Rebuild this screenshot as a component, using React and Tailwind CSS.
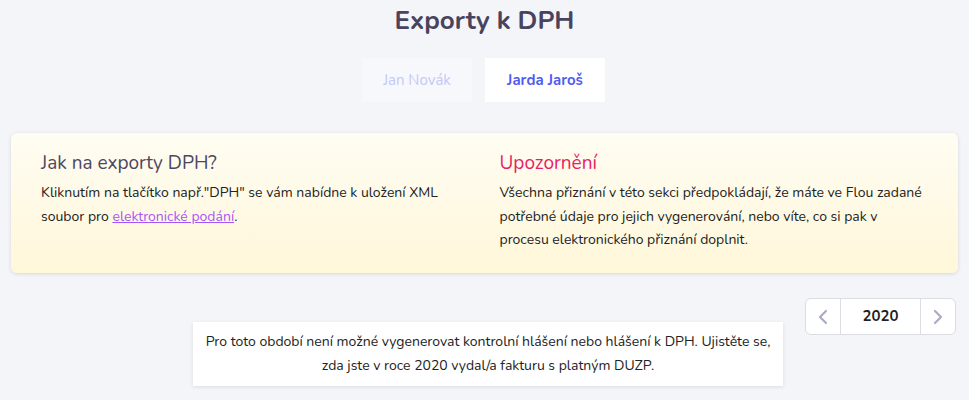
const font = { fontFamily: '"Nunito", "Open Sans", "Noto Sans", sans-serif' };

const YearPicker = ({ year }) => (
    <div className="flex h-[37px] rounded-md border border-[#dcdde3] bg-white overflow-hidden">
        <button className="w-[35px] flex items-center justify-center border-r border-[#dcdde3] text-[#a9adc4]">
            <svg width="10" height="16" viewBox="0 0 10 16" fill="none" stroke="currentColor" strokeWidth="2.2" strokeLinecap="round" strokeLinejoin="round">
                <path d="M8 2 L2 8 L8 14" />
            </svg>
        </button>
        <div className="w-[79px] flex items-center justify-center text-[15px] font-bold text-[#1f1f24]">{year}</div>
        <button className="w-[35px] flex items-center justify-center border-l border-[#dcdde3] text-[#a9adc4]">
            <svg width="10" height="16" viewBox="0 0 10 16" fill="none" stroke="currentColor" strokeWidth="2.2" strokeLinecap="round" strokeLinejoin="round">
                <path d="M2 2 L8 8 L2 14" />
            </svg>
        </button>
    </div>
);

const App = () => {
    return (
        <div className="min-h-[400px] bg-[#f4f5f8] text-[#222] overflow-hidden" style={font}>
            <h1 className="pt-[3px] text-center text-[26px] leading-[36px] font-bold text-[#49435f]">Exporty k DPH</h1>

            <div className="mt-[19px] flex justify-center gap-[13px] pr-[2px]">
                <button className="w-[110px] h-[44px] bg-[#f7f8fb] text-[15px] text-[#c4c8f7]">Jan Novák</button>
                <button className="w-[120px] h-[44px] bg-white text-[15px] font-bold text-[#4f5cf0]">Jarda Jaroš</button>
            </div>

            <div className="mx-[11px] mt-[31px] h-[140px] rounded-md bg-gradient-to-b from-[#fffdf3] to-[#fff7d9] shadow-[0_1px_4px_rgba(0,0,0,0.12)] px-[30px] pt-[17px] grid grid-cols-2 gap-x-[30px]">
                <div>
                    <h2 className="text-[19px] leading-[26px] text-[#4c4762]">Jak na exporty DPH?</h2>
                    <p className="mt-[5px] text-[14px] leading-[23.5px] text-[#222]">
                        Kliknutím na tlačítko např."DPH" se vám nabídne k uložení XML soubor pro{' '}
                        <a href="#" className="text-[#a855f7] underline">elektronické podání</a>.
                    </p>
                </div>
                <div>
                    <h2 className="text-[19px] leading-[26px] text-[#e91e63]">Upozornění</h2>
                    <p className="mt-[5px] text-[14px] leading-[23.5px] text-[#222]">
                        Všechna přiznání v této sekci předpokládají, že máte ve Flou zadané potřebné údaje pro jejich vygenerování, nebo víte, co si pak v procesu elektronického přiznání doplnit.
                    </p>
                </div>
            </div>

            <div className="mt-[25px] flex justify-end pr-[13px]">
                <YearPicker year="2020" />
            </div>

            <div className="mt-[-13px] flex justify-center pl-[7px]">
                <div className="w-[590px] h-[64px] bg-white shadow-[0_1px_4px_rgba(0,0,0,0.1)] flex items-center justify-center text-center text-[14px] leading-[24px] text-[#222] px-3">
                    Pro toto období není možné vygenerovat kontrolní hlášení nebo hlášení k DPH. Ujistěte se, zda jste v roce 2020 vydal/a fakturu s platným DUZP.
                </div>
            </div>
        </div>
    );
};

export default App;
